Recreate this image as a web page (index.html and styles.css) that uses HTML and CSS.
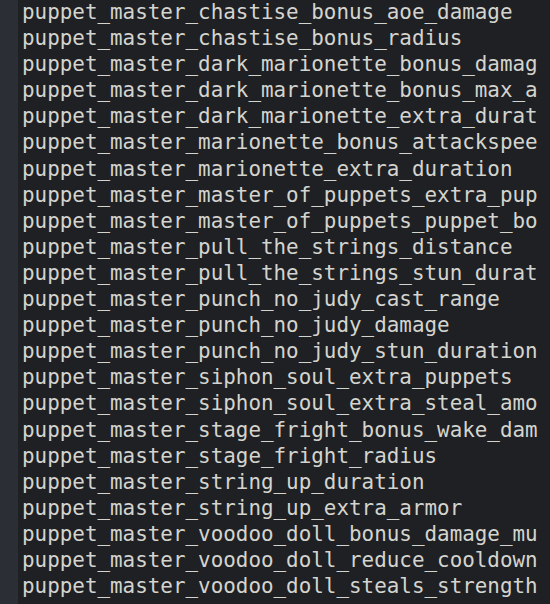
FILE: index.html
```html
<!DOCTYPE html>
<html>
<head>
<meta charset="utf-8">
<link rel="stylesheet" href="styles.css">
</head>
<body>
<div class="editor">
  <div class="gutter"></div>
  <div class="code">
    <div class="line">puppet_master_chastise_bonus_aoe_damage</div>
    <div class="line">puppet_master_chastise_bonus_radius</div>
    <div class="line">puppet_master_dark_marionette_bonus_damag</div>
    <div class="line">puppet_master_dark_marionette_bonus_max_a</div>
    <div class="line">puppet_master_dark_marionette_extra_durat</div>
    <div class="line">puppet_master_marionette_bonus_attackspee</div>
    <div class="line">puppet_master_marionette_extra_duration</div>
    <div class="line">puppet_master_master_of_puppets_extra_pup</div>
    <div class="line">puppet_master_master_of_puppets_puppet_bo</div>
    <div class="line">puppet_master_pull_the_strings_distance</div>
    <div class="line">puppet_master_pull_the_strings_stun_durat</div>
    <div class="line">puppet_master_punch_no_judy_cast_range</div>
    <div class="line">puppet_master_punch_no_judy_damage</div>
    <div class="line">puppet_master_punch_no_judy_stun_duration</div>
    <div class="line">puppet_master_siphon_soul_extra_puppets</div>
    <div class="line">puppet_master_siphon_soul_extra_steal_amo</div>
    <div class="line">puppet_master_stage_fright_bonus_wake_dam</div>
    <div class="line">puppet_master_stage_fright_radius</div>
    <div class="line">puppet_master_string_up_duration</div>
    <div class="line">puppet_master_string_up_extra_armor</div>
    <div class="line">puppet_master_voodoo_doll_bonus_damage_mu</div>
    <div class="line">puppet_master_voodoo_doll_reduce_cooldown</div>
    <div class="line">puppet_master_voodoo_doll_steals_strength</div>
  </div>
</div>
</body>
</html>
```
FILE: styles.css
```css
html, body {
  margin: 0;
  padding: 0;
  background: #1f2023;
  overflow: hidden;
}
.editor {
  display: flex;
  width: 550px;
  height: 604px;
  overflow: hidden;
  background: #1f2023;
}
.gutter {
  flex: 0 0 18px;
  background: #2b2f35;
}
.code {
  flex: 1;
  padding-left: 4px;
  margin-top: -1px;
  overflow: hidden;
  font-family: "DejaVu Sans Mono", monospace;
  font-size: 20.9px;
  line-height: 26.1px;
  color: #d4d4cf;
}
.line {
  white-space: pre;
}
```
